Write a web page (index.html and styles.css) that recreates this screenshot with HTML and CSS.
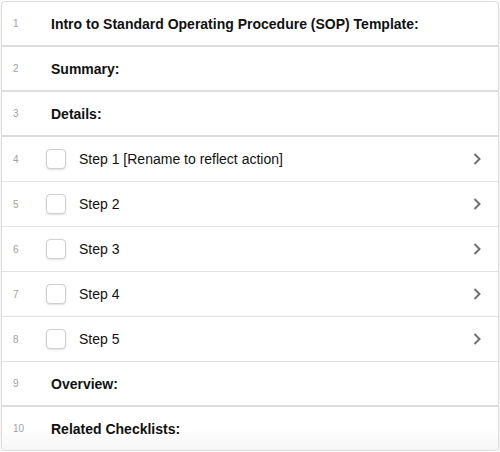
FILE: index.html
```html
<!DOCTYPE html>
<html>
<head>
<meta charset="utf-8">
<link rel="stylesheet" href="styles.css">
</head>
<body>
<div class="list">
  <div class="row head"><span class="num">1</span><span class="title">Intro to Standard Operating Procedure (SOP) Template:</span></div>
  <div class="row head"><span class="num">2</span><span class="title">Summary:</span></div>
  <div class="row head"><span class="num">3</span><span class="title">Details:</span></div>
  <div class="row step"><span class="num">4</span><span class="box"></span><span class="label">Step 1 [Rename to reflect action]</span><svg class="chev" viewBox="0 0 10 14" width="10" height="14"><path d="M2.5 2 L7.5 7 L2.5 12" fill="none" stroke="#707070" stroke-width="2"/></svg></div>
  <div class="row step"><span class="num">5</span><span class="box"></span><span class="label">Step 2</span><svg class="chev" viewBox="0 0 10 14" width="10" height="14"><path d="M2.5 2 L7.5 7 L2.5 12" fill="none" stroke="#707070" stroke-width="2"/></svg></div>
  <div class="row step"><span class="num">6</span><span class="box"></span><span class="label">Step 3</span><svg class="chev" viewBox="0 0 10 14" width="10" height="14"><path d="M2.5 2 L7.5 7 L2.5 12" fill="none" stroke="#707070" stroke-width="2"/></svg></div>
  <div class="row step"><span class="num">7</span><span class="box"></span><span class="label">Step 4</span><svg class="chev" viewBox="0 0 10 14" width="10" height="14"><path d="M2.5 2 L7.5 7 L2.5 12" fill="none" stroke="#707070" stroke-width="2"/></svg></div>
  <div class="row step"><span class="num">8</span><span class="box"></span><span class="label">Step 5</span><svg class="chev" viewBox="0 0 10 14" width="10" height="14"><path d="M2.5 2 L7.5 7 L2.5 12" fill="none" stroke="#707070" stroke-width="2"/></svg></div>
  <div class="row head"><span class="num">9</span><span class="title">Overview:</span></div>
  <div class="row head last"><span class="num">10</span><span class="title">Related Checklists:</span></div>
</div>
</body>
</html>
```
FILE: styles.css
```css
html, body {
  margin: 0;
  padding: 0;
  background: #ffffff;
}
body {
  padding: 1px 1px 0 1px;
  font-family: "Liberation Sans", Arial, Helvetica, sans-serif;
  color: #111;
}
.list {
  border: 1px solid #dcdcdc;
  border-radius: 4px;
  box-shadow: 0 1px 2px rgba(0,0,0,0.12);
  overflow: hidden;
  background: #fff;
}
.row {
  display: flex;
  align-items: center;
  box-sizing: border-box;
}
.head {
  height: 45px;
  border-bottom: 2px solid #dddddd;
}
.head.last {
  border-bottom: none;
  height: 43px;
  background: linear-gradient(#ffffff 50%, #f6f6f6);
}
.step {
  height: 45px;
  border-bottom: 1px solid #e2e2e2;
}
.num {
  width: 49px;
  padding-left: 11px;
  box-sizing: border-box;
  font-size: 10px;
  color: #a0a0a0;
}
.title {
  font-size: 14px;
  font-weight: bold;
  color: #111;
}
.box {
  width: 18px;
  height: 18px;
  margin-left: -5px;
  border: 1px solid #cfcfcf;
  border-radius: 4px;
  box-shadow: 0 1px 2px rgba(0,0,0,0.12);
  background: #fff;
  flex: none;
}
.label {
  margin-left: 13px;
  font-size: 14px;
  color: #111;
  flex: 1;
}
.chev {
  margin-right: 16px;
  flex: none;
}
```
